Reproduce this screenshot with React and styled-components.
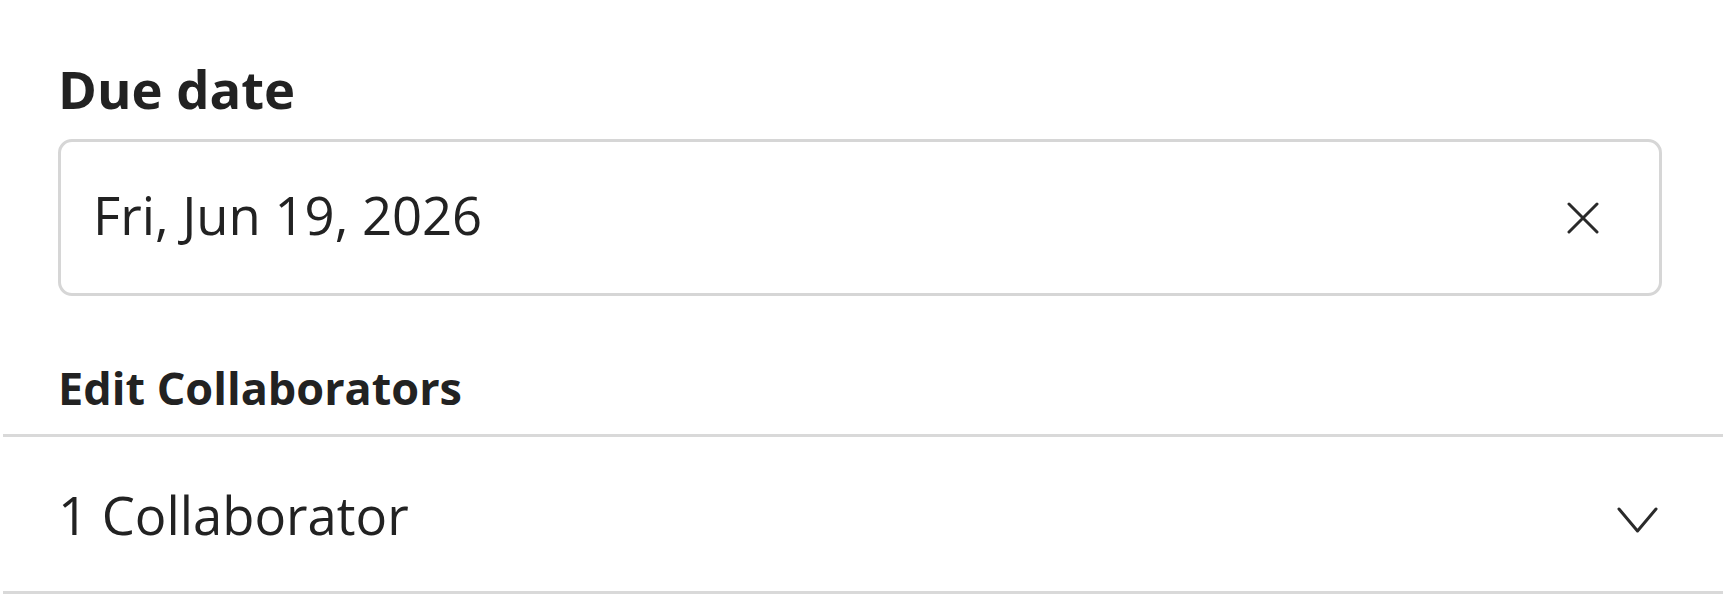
import React from 'react'
import styled, { createGlobalStyle } from 'styled-components'

const Global = createGlobalStyle`
  html, body {
    margin: 0;
    padding: 0;
    background: #ffffff;
  }
  body {
    font-family: "Open Sans", "Noto Sans", sans-serif;
    color: #222222;
  }
`

const Panel = styled.div`
  padding: 57px 3px 0;
  display: flex;
  flex-direction: column;
`

const Field = styled.div`
  padding: 0 61px 0 55px;
  display: flex;
  flex-direction: column;
`

const Label = styled.label`
  font-weight: 700;
  font-size: ${p => (p.small ? '45px' : '52.6px')};
  line-height: ${p => (p.small ? '48px' : '64px')};
  color: #222222;
  margin: ${p => (p.small ? '68px 0 22px' : '0 0 18px')};
`

const InputBox = styled.div`
  height: 151px;
  border: 3px solid #d6d6d6;
  border-radius: 14px;
  display: flex;
  align-items: center;
  justify-content: space-between;
  padding: 0 60px 0 32px;
`

const Value = styled.span`
  font-size: 52.6px;
  color: #222222;
  margin-bottom: 7px;
`

const IconButton = styled.button`
  border: none;
  background: none;
  padding: 0;
  display: flex;
  align-items: center;
  justify-content: center;
  color: #2a2a2a;
  margin-top: ${p => p.offset || 0}px;
`

const Dropdown = styled.div`
  border-top: 3px solid #d9d9d9;
  border-bottom: 3px solid #d9d9d9;
  height: 154px;
  display: flex;
  align-items: center;
  justify-content: space-between;
  padding: 0 65px 0 55px;
`

const DropText = styled.span`
  font-size: 52.6px;
  color: #222222;
`

const CloseIcon = () => (
  <svg width="32" height="32" viewBox="0 0 32 32" fill="none">
    <path d="M2 2 L30 30 M30 2 L2 30" stroke="currentColor" strokeWidth="3" strokeLinecap="round" />
  </svg>
)

const ChevronIcon = () => (
  <svg width="41" height="27" viewBox="0 0 41 27" fill="none">
    <path d="M2 2 L20.5 24 L39 2" stroke="currentColor" strokeWidth="3" strokeLinecap="round" strokeLinejoin="round" />
  </svg>
)

export default function App() {
  return (
    <>
      <Global />
      <Panel>
        <Field>
          <Label>Due date</Label>
          <InputBox>
            <Value>Fri, Jun 19, 2026</Value>
            <IconButton aria-label="Clear date"><CloseIcon /></IconButton>
          </InputBox>
          <Label small>Edit Collaborators</Label>
        </Field>
        <Dropdown>
          <DropText>1 Collaborator</DropText>
          <IconButton offset={12} aria-label="Toggle collaborators"><ChevronIcon /></IconButton>
        </Dropdown>
      </Panel>
    </>
  )
}
